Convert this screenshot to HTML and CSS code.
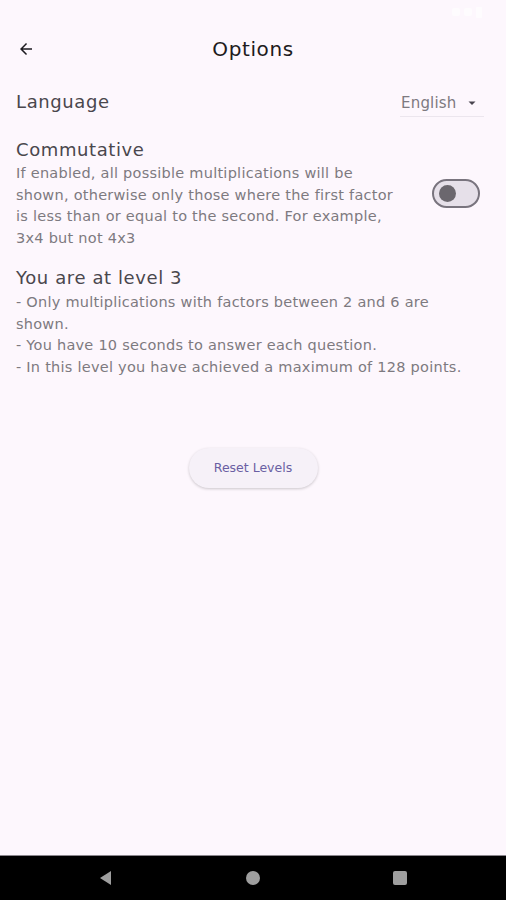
FILE: index.html
```html
<!DOCTYPE html>
<html lang="en">
<head>
    <meta charset="UTF-8">
    <title>Options</title>
    <meta name="viewport" content="width=device-width, initial-scale=1.0">
    <link rel="stylesheet" href="styles.css">
</head>
<body>
    <div class="screen">
        <div class="status-bar">
            <span class="status-icons">
                <span class="dot"></span><span class="dot"></span><span class="batt"></span>
            </span>
        </div>

        <header class="app-bar">
            <button class="back-btn" aria-label="Back">
                <svg width="18" height="18" viewBox="0 0 24 24"><path d="M20 11H7.83l5.59-5.59L12 4l-8 8 8 8 1.41-1.41L7.83 13H20v-2z" fill="#1d1b20"/></svg>
            </button>
            <h1 class="title">Options</h1>
        </header>

        <main class="content">
            <div class="row language-row">
                <span class="label">Language</span>
                <div class="dropdown">
                    <span>English</span>
                    <svg width="10" height="10" viewBox="0 0 10 10"><path d="M1.5 3.5h7L5 7z" fill="#49454f"/></svg>
                </div>
            </div>

            <div class="row option-row">
                <div class="option-text">
                    <div class="label">Commutative</div>
                    <p class="desc">If enabled, all possible multiplications will be shown, otherwise only those where the first factor is less than or equal to the second. For example, 3x4 but not 4x3</p>
                </div>
                <div class="switch"><span class="thumb"></span></div>
            </div>

            <div class="level">
                <div class="label">You are at level 3</div>
                <p class="desc">- Only multiplications with factors between 2 and 6 are shown.<br>
                - You have 10 seconds to answer each question.<br>
                - In this level you have achieved a maximum of 128 points.</p>
            </div>

            <div class="actions">
                <button class="reset-btn">Reset Levels</button>
            </div>
        </main>

        <nav class="nav-bar">
            <svg width="16" height="16" viewBox="0 0 16 16"><path d="M13 1v14L2 8z" fill="#9e9e9e"/></svg>
            <svg width="16" height="16" viewBox="0 0 16 16"><circle cx="8" cy="8" r="7" fill="#9e9e9e"/></svg>
            <svg width="16" height="16" viewBox="0 0 16 16"><rect x="1" y="1" width="14" height="14" rx="2" fill="#9e9e9e"/></svg>
        </nav>
    </div>
</body>
</html>
```

FILE: styles.css
```css
/* Base */
:root {
    --bg: #fdf7fd;
    --text-main: #4a474d;
    --text-soft: #7d7a80;
    --accent: #6a5fa3;
}

html, body {
    margin: 0;
    padding: 0;
}

body {
    background: var(--bg);
    font-family: 'DejaVu Sans', sans-serif;
    color: var(--text-main);
}

.screen {
    width: 506px;
    height: 900px;
    display: flex;
    flex-direction: column;
}

/* Status bar - icons are white on a light bg, nearly invisible */
.status-bar {
    height: 24px;
    display: flex;
    justify-content: flex-end;
    align-items: center;
    padding-right: 24px;
}

.status-icons {
    display: flex;
    gap: 4px;
    align-items: center;
    opacity: 0.7;
}

.status-icons .dot {
    width: 8px;
    height: 8px;
    background: #ffffff;
    border-radius: 2px;
}

.status-icons .batt {
    width: 6px;
    height: 11px;
    background: #ffffff;
    border-radius: 1px;
}

/* App bar */
.app-bar {
    height: 50px;
    display: flex;
    align-items: center;
    position: relative;
}

.back-btn {
    background: none;
    border: none;
    padding: 0;
    margin-left: 17px;
    width: 18px;
    height: 18px;
    display: flex;
}

.title {
    position: absolute;
    left: 0;
    right: 0;
    margin: 0;
    text-align: center;
    font-size: 20px;
    font-weight: normal;
    color: #1d1b20;
    letter-spacing: 0.6px;
    pointer-events: none;
}

/* Content */
.content {
    flex: 1;
    padding: 0 26px 0 16px;
}

.row {
    display: flex;
    justify-content: space-between;
    align-items: center;
}

.label {
    font-size: 18px;
    line-height: 24px;
    color: var(--text-main);
    letter-spacing: 0.6px;
}

.language-row {
    margin-top: 14px;
    height: 28px;
}

.dropdown {
    width: 84px;
    height: 28px;
    display: flex;
    align-items: center;
    justify-content: space-between;
    box-sizing: border-box;
    padding: 0 7px 0 1px;
    margin: 2px -4px 0 0;
    font-size: 15px;
    letter-spacing: 0.2px;
    color: var(--text-soft);
    border-bottom: 1px solid #ece6ee;
}

.option-row {
    margin-top: 22px;
}

.option-text {
    width: 388px;
}

.desc {
    margin: 1px 0 0;
    font-size: 14.5px;
    line-height: 21.7px;
    letter-spacing: 0.25px;
    color: var(--text-soft);
}

.switch {
    width: 44px;
    height: 25px;
    border: 2px solid #79747e;
    border-radius: 16px;
    background: #e6e0e9;
    position: relative;
}

.switch .thumb {
    position: absolute;
    left: 5px;
    top: 4px;
    width: 17px;
    height: 17px;
    border-radius: 50%;
    background: #6b676e;
}

.level {
    margin-top: 16px;
}

.level .desc {
    margin-top: 2px;
}

.actions {
    display: flex;
    justify-content: center;
    margin-top: 69px;
    padding-left: 10px;
}

.reset-btn {
    width: 129px;
    height: 40px;
    border: none;
    border-radius: 20px;
    background: #f6f1f8;
    color: var(--accent);
    font-family: 'DejaVu Sans', sans-serif;
    font-size: 12.5px;
    box-shadow: 0 1px 3px rgba(0, 0, 0, 0.2);
}

/* Android nav bar */
.nav-bar {
    height: 44px;
    background: #000000;
    border-top: 1px solid #8a868c;
    display: flex;
    justify-content: center;
    align-items: center;
    gap: 131px;
}
```
